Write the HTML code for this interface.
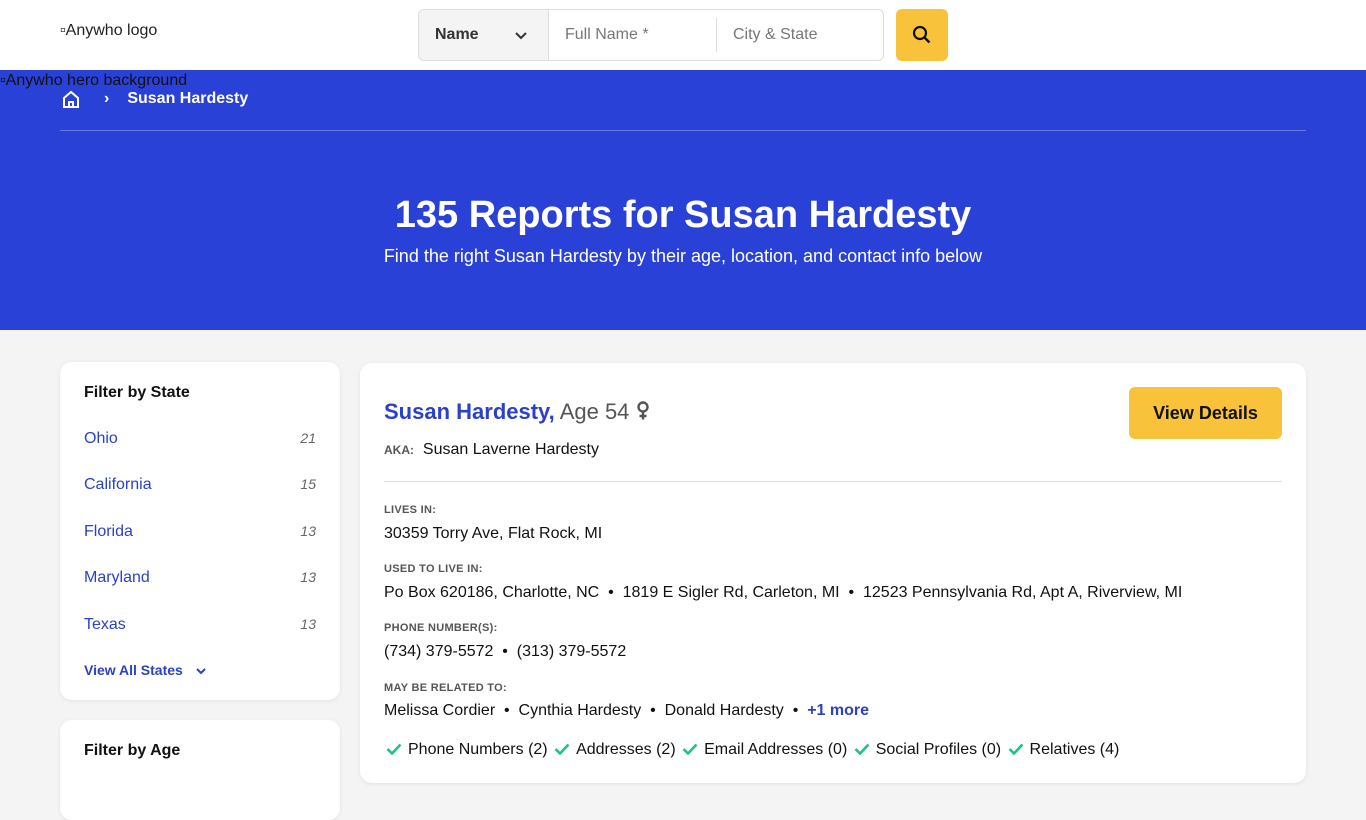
<!DOCTYPE html>
<html><head><meta charset="utf-8"><style>
*{box-sizing:border-box;margin:0;padding:0}
body{width:1366px;height:768px;overflow:hidden;background:#f4f4f4;font-family:"Liberation Sans",sans-serif;color:#111;position:relative}
.hdr{height:70px;background:#fff;position:relative}
.logo{position:absolute;left:60px;top:22px;font-size:16px;color:#222}
.search{position:absolute;left:418px;top:9px;width:466px;height:52px;border:1px solid #ddd;border-radius:6px;display:flex;overflow:hidden}
.sel{width:130px;background:#f4f4f4;border-right:1px solid #ddd;display:flex;align-items:center;padding-left:16px;font-weight:bold;font-size:16px;color:#333;position:relative}
.f{font-size:16px;color:#777;display:flex;align-items:center;padding-left:16px}
.btn{position:absolute;left:896px;top:9px;width:52px;height:52px;background:#f8c33a;border-radius:6px}
.hero{position:absolute;top:70px;left:0;width:1366px;height:260px;background:#2a41d8;color:#fff}
.alt{position:absolute;left:0;top:2px;font-size:16px;color:#111}
.bc{position:absolute;left:62px;top:20px;display:flex;align-items:center;font-weight:bold;font-size:16px}
.line{position:absolute;left:60px;right:60px;top:60px;border-top:1px solid rgba(255,255,255,.3)}
h1{position:absolute;top:124px;width:100%;text-align:center;font-size:38px;font-weight:bold}
.sub{position:absolute;top:176px;width:100%;text-align:center;font-size:18px}
.card{position:absolute;background:#fff;border-radius:12px;box-shadow:0 1px 4px rgba(0,0,0,.08)}
.fs h3{font-size:16px;font-weight:bold;position:absolute;left:24px}
.st{position:absolute;left:24px;right:24px;font-size:16px;color:#2a41c8;display:flex;justify-content:space-between}
.st i{font-size:14px;color:#666}
.lbl{position:absolute;left:24px;font-size:11px;font-weight:bold;color:#555;letter-spacing:.3px}
.val{position:absolute;left:24px;font-size:16px;color:#111}
.ck{display:inline-block;vertical-align:-1px;margin:0 6px 0 2px}
</style></head><body>
<div class="hdr"><div class="logo">▫Anywho logo</div>
<div class="search"><div class="sel">Name<svg style="position:absolute;right:20px" width="14" height="14" viewBox="0 0 14 14"><path d="M2 5l5 5 5-5" stroke="#333" stroke-width="2" fill="none"/></svg></div>
<div class="f" style="width:168px;border-right:1px solid #ddd;margin:8px 0;padding-left:16px">Full Name *</div><div class="f">City &amp; State</div></div>
<div class="btn"><svg style="margin:16px" width="20" height="20" viewBox="0 0 20 20"><circle cx="8" cy="8" r="6" stroke="#111" stroke-width="2.2" fill="none"/><path d="M12.5 12.5l5 5" stroke="#111" stroke-width="2.4"/></svg></div></div>
<div class="hero"><div class="alt">▫Anywho hero background</div>
<div class="bc"><svg width="18" height="18" viewBox="0 0 18 18"><path d="M2 8l7-6 7 6v9H2z M7 17v-5h4v5" stroke="#fff" stroke-width="2" fill="none"/></svg><span style="margin:0 18px 0 24px">›</span>Susan Hardesty</div>
<div class="line"></div>
<h1>135 Reports for Susan Hardesty</h1>
<div class="sub">Find the right Susan Hardesty by their age, location, and contact info below</div></div>
<div class="card fs" style="left:60px;top:362px;width:280px;height:338px">
<h3 style="top:22px">Filter by State</h3>
<div class="st" style="top:68px">Ohio<i>21</i></div>
<div class="st" style="top:114px">California<i>15</i></div>
<div class="st" style="top:161px">Florida<i>13</i></div>
<div class="st" style="top:207px">Maryland<i>13</i></div>
<div class="st" style="top:254px">Texas<i>13</i></div>
<div class="st" style="top:300px;font-size:14px;font-weight:bold;justify-content:flex-start">View All States <svg style="margin:3px 0 0 12px" width="12" height="12" viewBox="0 0 12 12"><path d="M2 4l4 4 4-4" stroke="#2a41c8" stroke-width="2" fill="none"/></svg></div></div>
<div class="card fs" style="left:60px;top:720px;width:280px;height:100px"><h3 style="top:22px">Filter by Age</h3></div>
<div class="card" style="left:360px;top:363px;width:946px;height:420px">
<div style="position:absolute;left:24px;top:36px;font-size:22px"><b style="color:#2a41c8">Susan Hardesty,</b> <span style="color:#555">Age 54</span> <svg width="14" height="20" viewBox="0 0 14 20" style="vertical-align:-2px"><circle cx="7" cy="6" r="4.5" stroke="#555" stroke-width="2.4" fill="none"/><path d="M7 10.5v8M3.5 15h7" stroke="#555" stroke-width="2.4"/></svg></div>
<div style="position:absolute;left:24px;top:78px;font-size:16px"><span style="font-size:12px;font-weight:bold;color:#555">AKA:</span>&nbsp; Susan Laverne Hardesty</div>
<div style="position:absolute;right:24px;top:24px;width:153px;height:52px;background:#f8c33a;border-radius:6px;font-weight:bold;font-size:18px;display:flex;align-items:center;justify-content:center">View Details</div>
<div style="position:absolute;left:24px;right:24px;top:118px;border-top:1px solid #ddd"></div>
<div class="lbl" style="top:141px">LIVES IN:</div><div class="val" style="top:162px">30359 Torry Ave, Flat Rock, MI</div>
<div class="lbl" style="top:200px">USED TO LIVE IN:</div><div class="val" style="top:221px">Po Box 620186, Charlotte, NC &nbsp;•&nbsp; 1819 E Sigler Rd, Carleton, MI &nbsp;•&nbsp; 12523 Pennsylvania Rd, Apt A, Riverview, MI</div>
<div class="lbl" style="top:259px">PHONE NUMBER(S):</div><div class="val" style="top:280px">(734) 379-5572 &nbsp;•&nbsp; (313) 379-5572</div>
<div class="lbl" style="top:319px">MAY BE RELATED TO:</div><div class="val" style="top:339px">Melissa Cordier &nbsp;•&nbsp; Cynthia Hardesty &nbsp;•&nbsp; Donald Hardesty &nbsp;•&nbsp; <b style="color:#2a41c8">+1 more</b></div>
<div class="val" style="top:378px"><svg class="ck" width="16" height="12" viewBox="0 0 16 12"><path d="M1.5 6l4.5 4.5 8.5-9" stroke="#1fbf8f" stroke-width="2.6" fill="none"/></svg>Phone Numbers (2) <svg class="ck" width="16" height="12" viewBox="0 0 16 12"><path d="M1.5 6l4.5 4.5 8.5-9" stroke="#1fbf8f" stroke-width="2.6" fill="none"/></svg>Addresses (2) <svg class="ck" width="16" height="12" viewBox="0 0 16 12"><path d="M1.5 6l4.5 4.5 8.5-9" stroke="#1fbf8f" stroke-width="2.6" fill="none"/></svg>Email Addresses (0) <svg class="ck" width="16" height="12" viewBox="0 0 16 12"><path d="M1.5 6l4.5 4.5 8.5-9" stroke="#1fbf8f" stroke-width="2.6" fill="none"/></svg>Social Profiles (0) <svg class="ck" width="16" height="12" viewBox="0 0 16 12"><path d="M1.5 6l4.5 4.5 8.5-9" stroke="#1fbf8f" stroke-width="2.6" fill="none"/></svg>Relatives (4)</div>
</div>
</body></html>
